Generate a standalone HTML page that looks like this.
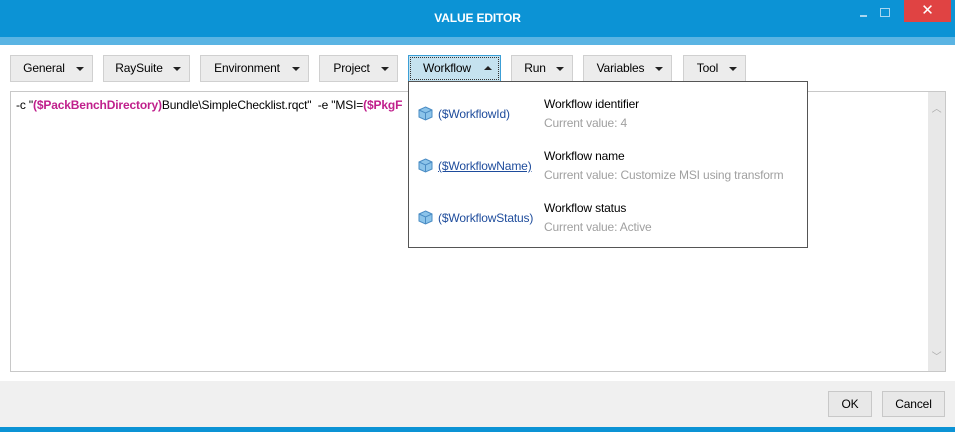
<!DOCTYPE html>
<html><head><style>
*{margin:0;padding:0;box-sizing:border-box}
body{width:955px;height:432px;position:relative;background:#fff;font-family:"Segoe UI","Liberation Sans",sans-serif;font-size:12px;letter-spacing:-0.15px;color:#000;overflow:hidden}
.title{position:absolute;left:0;top:0;width:955px;height:37px;background:#0c93d5}
.title .t{position:absolute;left:0;width:955px;top:11px;text-align:center;color:#fff;font-weight:bold;font-size:12px}
.strip{position:absolute;left:0;top:37px;width:955px;height:8px;background:#5ab4e3}
.close{position:absolute;left:904px;top:0;width:47px;height:22px;background:#e04343;color:#fff;text-align:center;font-size:15px;line-height:22px}
.min{position:absolute;left:860px;top:15px;width:7px;height:2px;background:#a8d6f0}
.max{position:absolute;left:880px;top:8px;width:10px;height:9px;border:1px solid #a8d6f0}
.btn{position:absolute;top:55px;height:27px;background:#ececec;border:1px solid #d0d0d0;line-height:25px}
.btn span{position:absolute;left:0;text-align:center}
.btn i{position:absolute;top:11px;right:8px;width:0;height:0;border-left:4px solid transparent;border-right:4px solid transparent;border-top:4px solid #222}
.btn.act{background:#c5e2ef;border:1px solid #3c9fd6;outline:1px dotted #333;outline-offset:-3px}
.btn.act i{border-top:none;border-bottom:4px solid #222;top:10px}
.box{position:absolute;left:10px;top:91px;width:936px;height:281px;border:1px solid #c8c8c8;background:#fff}
.sb{position:absolute;right:0;top:0;width:17px;height:279px;background:#e8e8e8;color:#aaa;font-size:10px;text-align:center}
.line{position:absolute;left:5px;top:6px;white-space:nowrap}
.m{color:#c0208c;font-weight:bold}
.foot{position:absolute;left:0;top:381px;width:955px;height:46px;background:#f0f0f0}
.bot{position:absolute;left:0;top:427px;width:955px;height:5px;background:#0c93d5}
.fb{position:absolute;top:391px;height:26px;background:#e8e8e8;border:1px solid #c8c8c8;text-align:center;line-height:24px}
.pop{position:absolute;left:408px;top:81px;width:400px;height:167px;background:#fff;border:1px solid #555}
.it{position:absolute;left:9px}
.it .ic{position:absolute;left:0;top:0;width:15px;height:15px}
.it .n{position:absolute;left:20px;top:1px;color:#1e4c9c;white-space:nowrap}
.it .h{position:absolute;left:126px;top:-9px;white-space:nowrap}
.it .s{position:absolute;left:126px;top:10px;color:#a0a0a0;white-space:nowrap}
</style></head><body>
<div class="title"><div class="t">VALUE EDITOR</div></div>
<div class="min"></div><div class="max"></div>
<div class="close">✕</div>
<div class="strip"></div>
<div class="btn" style="left:10px;width:83px"><span style="width:66px">General</span><i></i></div>
<div class="btn" style="left:103px;width:87px"><span style="width:70px">RaySuite</span><i></i></div>
<div class="btn" style="left:200px;width:109px"><span style="width:92px">Environment</span><i></i></div>
<div class="btn" style="left:319px;width:79px"><span style="width:63px">Project</span><i></i></div>
<div class="btn act" style="left:408px;width:93px"><span style="width:76px">Workflow</span><i></i></div>
<div class="btn" style="left:511px;width:62px"><span style="width:46px">Run</span><i></i></div>
<div class="btn" style="left:583px;width:89px"><span style="width:73px">Variables</span><i></i></div>
<div class="btn" style="left:683px;width:63px"><span style="width:47px">Tool</span><i></i></div>
<div class="box">
<div class="line">-c "<span class="m">($PackBenchDirectory)</span>Bundle\SimpleChecklist.rqct"&nbsp; -e "MSI=<span class="m">($PkgF</span></div>
<div class="sb"><div style="margin-top:8px">︿</div><div style="position:absolute;bottom:8px;width:17px">﹀</div></div>
</div>
<div class="pop">
<div class="it" style="top:24px"><svg class="ic" viewBox="0 0 15 15"><path d="M7.5 1L14 4v7l-6.5 3L1 11V4z" fill="#8cc4ea" stroke="#4a8cc4"/><path d="M1 4l6.5 3L14 4M7.5 7v7" fill="none" stroke="#4a8cc4"/></svg><span class="n">($WorkflowId)</span><span class="h">Workflow identifier</span><span class="s">Current value: 4</span></div>
<div class="it" style="top:76px"><svg class="ic" viewBox="0 0 15 15"><path d="M7.5 1L14 4v7l-6.5 3L1 11V4z" fill="#8cc4ea" stroke="#4a8cc4"/><path d="M1 4l6.5 3L14 4M7.5 7v7" fill="none" stroke="#4a8cc4"/></svg><span class="n" style="text-decoration:underline">($WorkflowName)</span><span class="h">Workflow name</span><span class="s">Current value: Customize MSI using transform</span></div>
<div class="it" style="top:128px"><svg class="ic" viewBox="0 0 15 15"><path d="M7.5 1L14 4v7l-6.5 3L1 11V4z" fill="#8cc4ea" stroke="#4a8cc4"/><path d="M1 4l6.5 3L14 4M7.5 7v7" fill="none" stroke="#4a8cc4"/></svg><span class="n">($WorkflowStatus)</span><span class="h">Workflow status</span><span class="s">Current value: Active</span></div>
</div>
<div class="foot"></div>
<div class="fb" style="left:828px;width:44px">OK</div>
<div class="fb" style="left:882px;width:63px">Cancel</div>
<div class="bot"></div>
</body></html>
